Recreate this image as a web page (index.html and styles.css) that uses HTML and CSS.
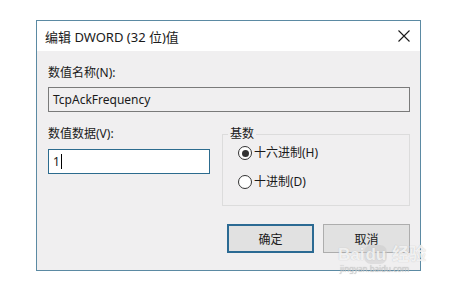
FILE: index.html
```html
<!DOCTYPE html>
<html lang="zh-CN">
<head>
  <meta charset="UTF-8">
  <title>编辑 DWORD (32 位)值</title>
  <link rel="stylesheet" href="styles.css">
</head>
<body>
  <!-- 对话框 -->
  <div class="dialog">
    <div class="titlebar">
      <span class="title">编辑 DWORD (32 位)值</span>
      <svg class="close" width="12" height="12" viewBox="0 0 12 12">
        <path d="M0.5 0.5 L11.5 11.5 M11.5 0.5 L0.5 11.5" stroke="#1a1a1a" stroke-width="1.1" fill="none"/>
      </svg>
    </div>

    <div class="body">
      <div class="label">数值名称(N):</div>
      <div class="textbox readonly">TcpAckFrequency</div>

      <div class="row">
        <div class="col-data">
          <div class="label">数值数据(V):</div>
          <div class="textbox focused">1<span class="caret"></span></div>
        </div>
        <fieldset class="group">
          <legend>基数</legend>
          <div class="radio-row">
            <span class="radio checked"></span>十六进制(H)
          </div>
          <div class="radio-row">
            <span class="radio"></span>十进制(D)
          </div>
        </fieldset>
      </div>

      <div class="buttons">
        <button class="btn default">确定</button>
        <button class="btn">取消</button>
      </div>
    </div>
  </div>

  <!-- 水印 -->
  <div class="watermark">
    <div class="wm-main">Bai<span class="wm-du">du</span> 经验</div>
    <div class="wm-sub">jingyan.baidu.com</div>
  </div>
</body>
</html>
```

FILE: styles.css
```css
/* 全局 */
html, body {
  margin: 0;
  padding: 0;
  background: #fff;
  font-family: "Noto Sans", "Noto Sans CJK SC", sans-serif;
  font-size: 12px;
  color: #1a1a1a;
}
/* 对话框外框 */
.dialog {
  position: relative;
  margin: 20px 0 0 36px;
  width: 385px;
  height: 251px;
  box-sizing: border-box;
  border: 1px solid #5b8aa3;
  background: #f0eff0;
}
/* 标题栏 */
.titlebar {
  height: 30px;
  background: #fff;
  display: flex;
  align-items: center;
  justify-content: space-between;
  padding: 0 10px 0 8px;
}
.title {
  font-size: 13px;
}
.close {
  display: block;
}
/* 内容区 */
.body {
  padding: 15px 10px 0 11px;
}
.label {
  line-height: 14px;
  height: 14px;
}
.textbox {
  margin-top: 7px;
  height: 25px;
  box-sizing: border-box;
  border: 1px solid #7a7a7a;
  padding: 0 4px;
  line-height: 23px;
  font-size: 12px;
}
.textbox.readonly {
  background: #f0eff0;
}
.textbox.focused {
  margin-top: 8px;
  background: #fff;
  border-color: #2c6b8e;
}
.caret {
  display: inline-block;
  width: 1px;
  height: 15px;
  background: #000;
  vertical-align: -3px;
  margin-left: 1px;
}
/* 数值数据 + 基数 */
.row {
  display: flex;
  gap: 12px;
  margin-top: 15px;
}
.col-data {
  width: 162px;
}
.group {
  width: 188px;
  height: 79px;
  box-sizing: border-box;
  margin: 0;
  padding: 0 0 0 5px;
  border: 1px solid #dcdcdc;
  min-width: 0;
}
.group legend {
  padding: 0 2px;
  line-height: 14px;
}
.radio-row {
  display: flex;
  align-items: center;
  gap: 2px;
  height: 14px;
  line-height: 14px;
  margin-left: 10px;
  margin-top: 5px;
}
.radio-row + .radio-row {
  margin-top: 15px;
}
.radio {
  width: 14px;
  height: 14px;
  box-sizing: border-box;
  border: 1px solid #333;
  border-radius: 50%;
  background: #fff;
  display: flex;
  align-items: center;
  justify-content: center;
}
.radio.checked::after {
  content: "";
  width: 7px;
  height: 7px;
  border-radius: 50%;
  background: #333;
}
/* 按钮 */
.buttons {
  display: flex;
  justify-content: flex-end;
  gap: 9px;
  margin-top: 18px;
}
.btn {
  width: 87px;
  height: 29px;
  box-sizing: border-box;
  border: 1px solid #adadad;
  background: #e1e1e1;
  font-family: inherit;
  font-size: 12px;
  color: #1a1a1a;
  padding: 0;
}
.btn.default {
  border: 2px solid #2b6a93;
}
/* 百度经验水印 */
.watermark {
  position: absolute;
  left: 338px;
  top: 246px;
  color: rgba(255, 255, 255, 0.8);
  text-shadow: 0 0 1px rgba(150, 150, 150, 0.6);
  pointer-events: none;
}
.wm-main {
  font-family: "Liberation Sans", "Noto Sans CJK SC", sans-serif;
  font-size: 17px;
  font-weight: bold;
  line-height: 18px;
}
.wm-du {
  background: rgba(200, 200, 200, 0.45);
  border-radius: 7px;
  padding: 0 1px;
}
.wm-sub {
  font-size: 8px;
  line-height: 9px;
  margin-left: 2px;
  color: rgba(210, 210, 210, 0.8);
}
```
